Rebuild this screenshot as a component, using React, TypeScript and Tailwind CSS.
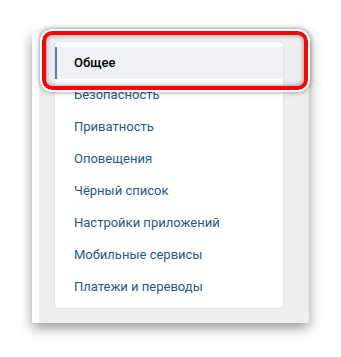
const items = [
  'Безопасность',
  'Приватность',
  'Оповещения',
  'Чёрный список',
  'Настройки приложений',
  'Мобильные сервисы',
  'Платежи и переводы',
];

export default function App() {
  return (
    <div
      className="w-[341px] h-[357px] bg-white pl-[32px] pt-[32px]"
      style={{ fontFamily: 'Roboto, "Open Sans", Arial, sans-serif' }}
    >
      <div className="relative flex w-[277px] h-[291px] bg-[#edeef0] shadow-[0_5px_12px_rgba(0,0,0,0.4)]">
        <div className="w-[7px] h-full bg-white" />
        <div className="pl-[15px] pt-[9px]">
          <div className="w-[230px] bg-white rounded-[4px] border border-[#e1e3e6] py-[5px]">
            <div className="h-[32px] flex items-center border-l-2 border-[#5181b8] bg-[#f0f2f5] pl-[17px] text-[13px] font-medium text-black">
              Общее
            </div>
            {items.map((item) => (
              <div
                key={item}
                className="h-[32px] flex items-center pl-[19px] text-[13px] text-[#2a5885]"
              >
                {item}
              </div>
            ))}
          </div>
        </div>

        {/* red highlight around the selected item */}
        <div className="absolute left-[10px] top-[-1px] w-[266px] h-[59px] rounded-[10px] border-[4px] border-[#ff0000] outline outline-2 outline-white shadow-[0_0_5px_2px_rgba(0,0,0,0.45),inset_0_0_5px_rgba(0,0,0,0.45)]" />
      </div>
    </div>
  );
}
